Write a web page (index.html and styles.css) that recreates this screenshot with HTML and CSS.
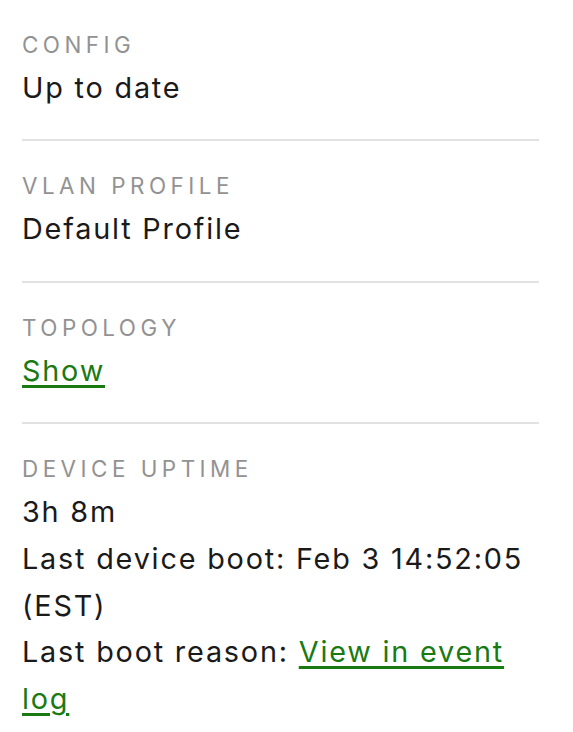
FILE: index.html
```html
<!DOCTYPE html>
<html>
<head>
<meta charset="utf-8">
<link rel="stylesheet" href="styles.css">
</head>
<body>
<div class="panel">
  <section class="item">
    <div class="label">Config</div>
    <div class="value">Up to date</div>
  </section>
  <section class="item">
    <div class="label">VLAN Profile</div>
    <div class="value">Default Profile</div>
  </section>
  <section class="item">
    <div class="label">Topology</div>
    <div class="value"><a href="#" class="link">Show</a></div>
  </section>
  <section class="item">
    <div class="label">Device uptime</div>
    <div class="value">3h 8m</div>
    <div class="value">Last device boot: Feb 3 14:52:05 (EST)</div>
    <div class="value">Last boot reason: <a href="#" class="link">View in event log</a></div>
  </section>
</div>
</body>
</html>
```
FILE: styles.css
```css
html, body {
  margin: 0;
  padding: 0;
  background: #ffffff;
}
body {
  font-family: Inter, "Noto Sans", sans-serif;
  color: #1a1a1a;
}
.panel {
  width: 517px;
  padding: 0 34px 0 22px;
}
.item {
  padding: 28px 0 27.3px;
  border-bottom: 2px solid #e2e2e2;
}
.item:last-child {
  border-bottom: none;
}
.label {
  font-size: 22.4px;
  line-height: 33.6px;
  letter-spacing: 4.5px;
  text-transform: uppercase;
  color: #929292;
  margin-bottom: 3.6px;
}
.value {
  font-size: 28.8px;
  line-height: 46.8px;
  letter-spacing: 1.8px;
}
.link {
  color: #1a7a12;
  text-decoration: underline;
  text-underline-offset: 4px;
  text-decoration-thickness: 2.5px;
}
```
